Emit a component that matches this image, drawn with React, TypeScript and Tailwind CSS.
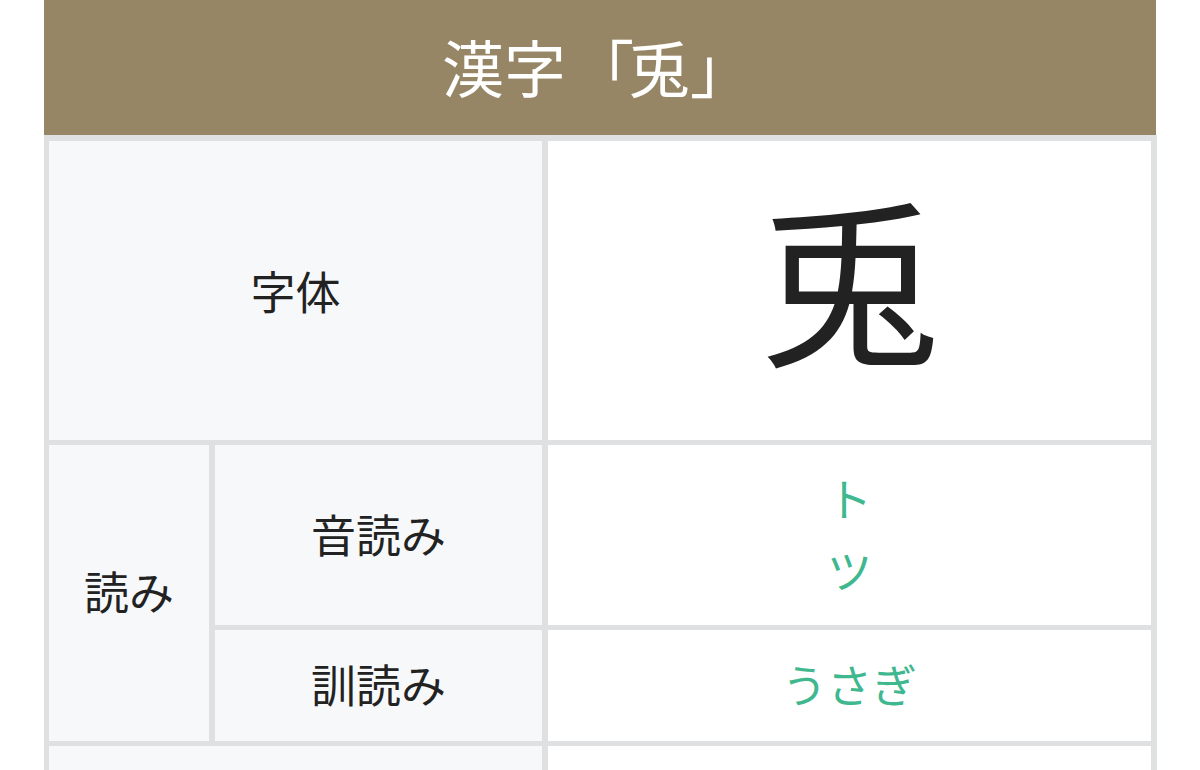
import React from "react";

const font = { fontFamily: '"Noto Sans CJK JP", "Noto Sans", sans-serif' };

export default function App() {
  return (
    <div className="w-[1200px] h-[770px] overflow-hidden bg-white" style={font}>
      <div className="ml-[44px] w-[1113px]">
        <div className="h-[135px] w-[1112px] bg-[#978665] flex items-center justify-center">
          <span className="text-white text-[62px] leading-none -mt-[4px] -ml-[6px]">
            漢字<span className="inline-block ml-[6px] -mr-[6px]">「</span>兎」
          </span>
        </div>
        <div className="bg-[#dfe0e2] pt-[6px] pl-[5px] pr-[6px] grid grid-cols-[160px_327px_603px] grid-rows-[299px_180px_111px_100px] gap-x-[6px] gap-y-[5px] text-[#222222]">
          <div className="col-span-2 bg-[#f7f8fa] flex items-center justify-center text-[45px] leading-none">
            字体
          </div>
          <div className="bg-white flex items-center justify-center">
            <span className="text-[182px] leading-none -mt-[34px]">兎</span>
          </div>

          <div className="row-span-2 bg-[#f7f8fa] flex items-center justify-center text-[45px] leading-none">
            <span className="-mt-[6px]">読み</span>
          </div>
          <div className="bg-[#f7f8fa] flex items-center justify-center text-[45px] leading-none">
            <span className="-mt-[4px]">音読み</span>
          </div>
          <div className="bg-white flex flex-col items-center justify-center text-[45px] leading-[72px] text-[#3fb88f]">
            <span className="-mt-[2px]">ト</span>
            <span>ツ</span>
          </div>

          <div className="bg-[#f7f8fa] flex items-center justify-center text-[45px] leading-none">
            <span className="-mt-[4px]">訓読み</span>
          </div>
          <div className="bg-white flex items-center justify-center text-[45px] leading-none text-[#3fb88f]">
            <span className="-mt-[4px]">うさぎ</span>
          </div>

          <div className="col-span-2 bg-[#f7f8fa]"></div>
          <div className="bg-white"></div>
        </div>
      </div>
    </div>
  );
}
